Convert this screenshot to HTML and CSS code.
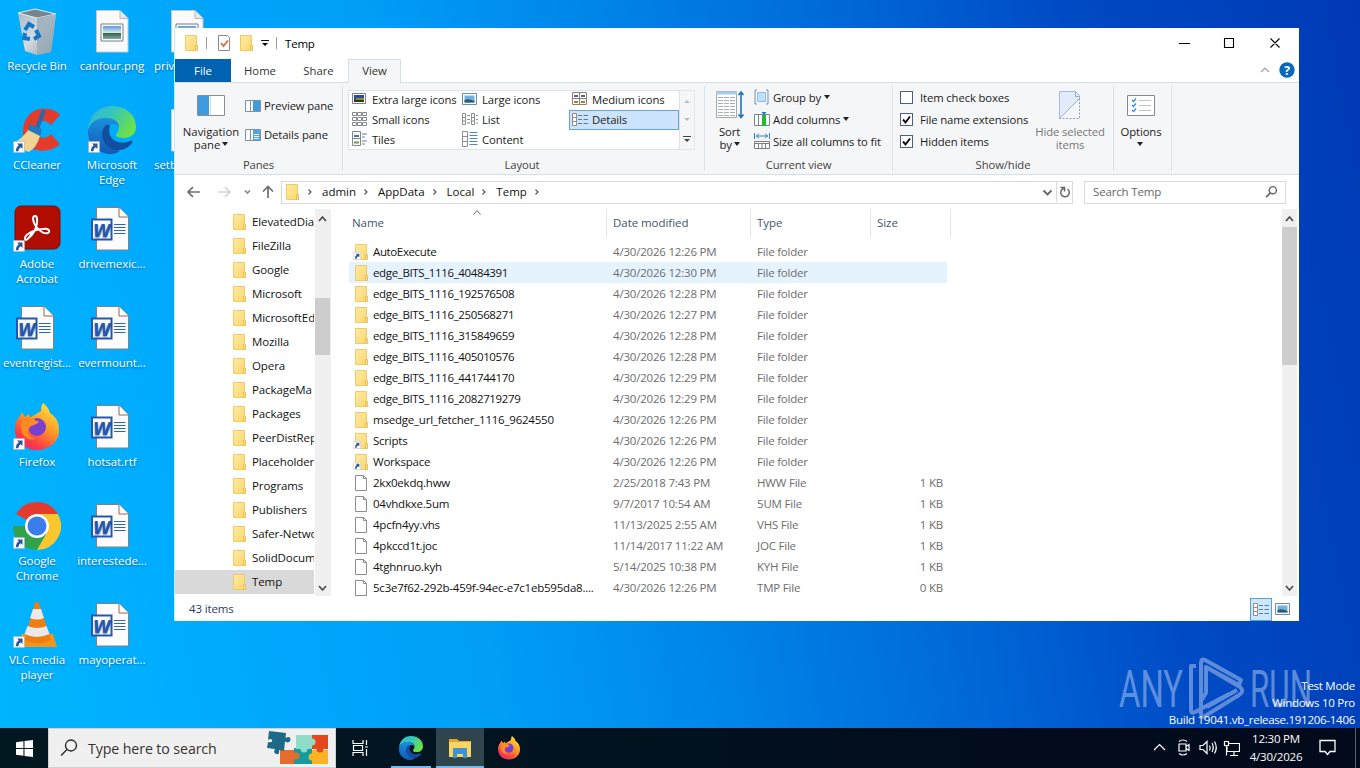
FILE: index.html
```html
<!DOCTYPE html>
<html lang="en">
<head>
<meta charset="utf-8">
<title>Temp</title>
<link rel="stylesheet" href="styles.css">
</head>
<body>
<svg class="defs" aria-hidden="true">
  <defs>
    <linearGradient id="gFold" x1="0" y1="0" x2="1" y2="1"><stop offset="0" stop-color="#ffeba6"/><stop offset="1" stop-color="#fcd66c"/></linearGradient>
    <linearGradient id="gEdge1" x1="0" y1="0" x2="1" y2=".5"><stop offset="0" stop-color="#2fb4e0"/><stop offset=".5" stop-color="#36c7b8"/><stop offset="1" stop-color="#6be04a"/></linearGradient>
    <linearGradient id="gEdge2" x1="0" y1="0" x2="0" y2="1"><stop offset="0" stop-color="#1b90dc"/><stop offset="1" stop-color="#1059b4"/></linearGradient>
    <linearGradient id="gFox" x1=".8" y1="0" x2=".2" y2="1"><stop offset="0" stop-color="#ffe83c"/><stop offset=".45" stop-color="#ff9526"/><stop offset=".8" stop-color="#fb3a47"/><stop offset="1" stop-color="#e52a7a"/></linearGradient>
    <linearGradient id="gBin" x1="0" y1="0" x2="1" y2="1"><stop offset="0" stop-color="#a9b7c1"/><stop offset=".5" stop-color="#d3dbe0"/><stop offset="1" stop-color="#8f9ba6"/></linearGradient>
    <linearGradient id="gPic" x1="0" y1="0" x2="0" y2="1"><stop offset="0" stop-color="#5d9ad8"/><stop offset=".5" stop-color="#d5e8ef"/><stop offset=".55" stop-color="#35604c"/><stop offset="1" stop-color="#7eaa9e"/></linearGradient>
    <symbol id="folder" viewBox="0 0 16 16"><path d="M2.500 .5h11v15h-11z" fill="url(#gFold)" stroke="#edcb66"/><path d="M12.500 10.500h2v5h-2z" fill="#fbe08a" stroke="#e6bc52" stroke-width=".9"/></symbol>
    <symbol id="arrow" viewBox="0 0 12 12"><path d="M.5.5h11v11H.5z" fill="#fff" stroke="#9fb4c8" stroke-width=".6"/><path d="M4 2.500h5.500V8L7.800 6.300Q5.500 7.500 5.300 10.200H3Q2.700 6.500 5.800 4.300z" fill="#2a569c"/></symbol>
    <symbol id="folderlink" viewBox="0 0 16 16"><use href="#folder" width="16" height="16"/><use href="#arrow" x="0" y="8" width="8" height="8"/></symbol>
    <symbol id="file" viewBox="0 0 16 16"><path d="M2.500.5h8l3 3v12h-11z" fill="#fff" stroke="#8d8d8d"/><path d="M10.500.5v3h3" fill="none" stroke="#8d8d8d"/></symbol>
    <symbol id="word" viewBox="0 0 48 48"><path d="M13.500 2.500H36l9.500 9.500v33h-32z" fill="#fcfcfc" stroke="#7d8287"/><path d="M36 2.500V12h9.500" fill="#fff" stroke="#a65e4c"/><path d="M31 19.500h11.500M31 22.500h11.500M31 25.500h11.500M31 28.500h11.500" stroke="#2d65b5"/><path d="M9 14.500h19.500v20H9z" fill="#fff" stroke="#2458ae" stroke-width="2"/><text x="18.900" y="31.500" text-anchor="middle" textLength="18" lengthAdjust="spacingAndGlyphs" class="w">W</text></symbol>
    <symbol id="png" viewBox="0 0 48 48"><path d="M8.500 3.500h23.500l8 8v33.500h-31.500z" fill="#fafafa" stroke="#c7c7c7"/><path d="M32 3.500v8h8" fill="#e8e8e8" stroke="#b9b9b9"/><path d="M13 17h22v17H13z" fill="#fff" stroke="#6a8098"/><path d="M15 19h18v13H15z" fill="url(#gPic)"/></symbol>
    <symbol id="edge" viewBox="0 0 48 48"><path d="M0 24C1 9 11 0 24 0c14 0 24 9 24 21 0 7-5 11-12 11-5 0-8-1-8-3s3-3 3-8c0-6-6-9-13-9C9 12 2 17 0 24z" fill="url(#gEdge1)"/><path d="M0 25C2 16 9 12 17 12c8 0 14 4 14 9-2-3-6-4-9-2-6 4-6 13-1 19 3 4 7 6 11 7-4 3-8 3-11 3C9 47-1 37 0 25z" fill="url(#gEdge2)"/><path d="M18 19c-5 5-5 12-1 18 6 9 19 10 27 0 1-2 0-3-2-2-12 5-24-2-20-16z" fill="#114f9e"/></symbol>
    <symbol id="firefox" viewBox="0 0 48 48"><path d="M30 0c4 3 6 6 7 10 6 4 9 9 9 17 0 12-10 20-22 20S2 39 2 26c0-6 2-10 5-13l2-4 3 5 4-3 1 4C20 12 26 10 28 8c0-3 0-5 2-8z" fill="url(#gFox)"/><circle cx="24" cy="24" r="9" fill="#7a3fd0"/><path d="M12 15c3-2 8-1 11 3h3c-1 3-5 4-8 5-5 3-3 12 5 13-9 2-15-4-15-12 0-4 1-7 4-9z" fill="#ff8b20"/></symbol>
    <symbol id="winlogo" viewBox="0 0 16 16"><path d="M0 2.200 7 1.200V7.500H0zM8 1 16 0V7.500H8zM0 8.500h7v6.300L0 13.800zM8 8.500h8V16L8 15z" fill="#fff"/></symbol>
    <symbol id="pic" viewBox="0 0 16 16"><path d="M.5 2.500h14v11H.5z" fill="#fff" stroke="#7089ab"/><path d="M2.500 4.500h10v7h-10z" fill="#6fb1e6"/><path d="M2.500 9q4-2 10 1v1.500h-10z" fill="#2d5c66"/></symbol>
    <symbol id="details" viewBox="0 0 16 16"><path d="M.5 2.500h4v12h-4zM.5 6.500h4M.5 10.500h4" fill="#fff" stroke="#9a8b83"/><path d="M6 4.500h4M11.500 4.500H16M6 8.500h4M11.500 8.500H16M6 12.500h4M11.500 12.500H16" stroke="#5b79a0"/></symbol>
  </defs>
</svg>

<main class="desktop">
  <section class="icons">
    <div class="dicon"><svg viewBox="0 0 48 48"><path d="M5 6 22 2l21 5-5 38-14 3-12-4z" fill="url(#gBin)"/><path d="M5 6 22 2l21 5-19 4z" fill="#75848f" stroke="#e4ebef"/><path d="M24 11 43 7l-5 38-14 3z" fill="#96a8b5" opacity=".75"/><g fill="none" stroke="#1377cb" stroke-width="4"><path d="m12 23 4-6 5 3"/><path d="m23 23 3 6-5 3"/><path d="m17 32-6-1 1-5"/></g></svg><span>Recycle Bin</span></div>
    <div class="dicon"><svg><use href="#png"/></svg><span>canfour.png</span></div>
    <div class="dicon cut"><svg><use href="#png"/></svg><span>priv</span></div>

    <div class="dicon"><svg viewBox="0 0 48 48"><path d="M47 9C41 1 25 0 17 8 7 18 8 35 18 42c9 5 22 3 29-4l-9-10c-4 5-11 5-14 0-4-6 0-13 7-13 3 0 5 2 7 4z" fill="#e43c2c"/><path d="M31 4 23 25" stroke="#256ab0" stroke-width="4"/><path d="m16 18 13 5-2 8-12-5z" fill="#2478bd"/><path d="M15 24Q9 33 0 37q5 6 16 9 8-5 11-16z" fill="#f3d394"/></svg><svg class="link"><use href="#arrow"/></svg><span>CCleaner</span></div>
    <div class="dicon"><svg><use href="#edge"/></svg><svg class="link"><use href="#arrow"/></svg><span>Microsoft Edge</span></div>
    <div class="dicon cut"><svg><use href="#png"/></svg><span>setb</span></div>

    <div class="dicon"><svg viewBox="0 0 48 48"><rect x="2" y="1" width="45" height="43" rx="6" fill="#b10c00" stroke="#820a03"/><path d="M14 34c7-4 11-14 10-20 0-4-4-4-4 0 1 7 9 16 15 14 3-2 0-5-5-4-7 0-19 5-18 10 1 3 5-2 8-8" fill="none" stroke="#fff" stroke-width="2"/></svg><svg class="link"><use href="#arrow"/></svg><span>Adobe Acrobat</span></div>
    <div class="dicon"><svg class="doc"><use href="#word"/></svg><span>drivemexic...</span></div><i></i>

    <div class="dicon"><svg class="doc"><use href="#word"/></svg><span>eventregist...</span></div>
    <div class="dicon"><svg class="doc"><use href="#word"/></svg><span>evermount...</span></div><i></i>

    <div class="dicon"><svg><use href="#firefox"/></svg><svg class="link"><use href="#arrow"/></svg><span>Firefox</span></div>
    <div class="dicon"><svg class="doc"><use href="#word"/></svg><span>hotsat.rtf</span></div><i></i>

    <div class="dicon"><svg viewBox="0 0 48 48"><path d="M24 24 3.200 12A24 24 0 0 1 44.800 12z" fill="#e33b2e"/><path d="M24 24H0A24 24 0 0 1 3.200 12zM24 24 3.200 12A24 24 0 0 0 24 48L34 30z" fill="#2fa24b"/><path d="M24 24V12h20.800A24 24 0 0 1 24 48l10.400-18z" fill="#fcc62d"/><circle cx="24" cy="24" r="12" fill="#fff"/><circle cx="24" cy="24" r="9.500" fill="#3b7ded"/></svg><svg class="link"><use href="#arrow"/></svg><span>Google Chrome</span></div>
    <div class="dicon"><svg class="doc"><use href="#word"/></svg><span>interestede...</span></div><i></i>

    <div class="dicon"><svg viewBox="0 0 48 48"><path d="M9 33h31l4 13H4z" fill="#f79415"/><path d="M22 2q2-2 4 0l12 37q-13 7-27 0z" fill="#ef7d10"/><path d="m20 8-3 9q7 3 14 0l-3-9zM14.500 25l-3 8q12 6 25 0l-3-8q-9 4-19 0z" fill="#e9e9ec"/></svg><svg class="link"><use href="#arrow"/></svg><span>VLC media player</span></div>
    <div class="dicon"><svg class="doc"><use href="#word"/></svg><span>mayoperat...</span></div>
  </section>

  <svg class="watermark" viewBox="0 0 200 70">
    <text x="2" y="52" textLength="64" lengthAdjust="spacingAndGlyphs">ANY</text>
    <text x="133" y="52" textLength="62" lengthAdjust="spacingAndGlyphs">RUN</text>
    <path d="M79 11h-5v44q0 4 4 2l34-18M84 46V8q0-5 4-3l36 20-2 5-33-18v26zM84 46v13q0 4 4 2l34-21q6-4 1-8L89 12M90 52l30-17" fill="none"/>
  </svg>
  <div class="build"><p>Test Mode</p><p>Windows 10 Pro</p><p>Build 19041.vb_release.191206-1406</p></div>

  <section class="window">
    <header class="titlebar">
      <svg class="i16"><use href="#folder"/></svg><b class="sep"></b>
      <svg class="i16 prop" viewBox="0 0 16 16"><path d="M2.500.5h9l2 2v13h-11z" fill="#fff" stroke="#8b8b8b"/><path d="m5 8 2.500 3L12 5.500" fill="none" stroke="#d86c43" stroke-width="1.800"/></svg>
      <svg class="i16 newf"><use href="#folder"/></svg>
      <svg class="qa" viewBox="0 0 8 8"><path d="M0 1.500h8" stroke="#111"/><path d="M1 4h6L4 7z"/></svg><b class="sep two"></b>
      <span class="wtitle">Temp</span>
      <svg class="controls" viewBox="0 0 110 20"><path d="M5 10.500h11M50.500 5.500h9v9h-9zM96.500 5.500l9 9M105.500 5.500l-9 9" fill="none" stroke="#000" stroke-width="1.100"/></svg>
    </header>

    <nav class="tabs">
      <span class="file">File</span><span class="tab home">Home</span><span class="tab share">Share</span><span class="tab on">View</span>
      <svg class="help" viewBox="0 0 38 20"><path d="m2 12 4-4 4 4" fill="none" stroke="#a3a3a3" stroke-width="1.200"/><circle cx="28" cy="10" r="7.700" fill="#0a68b8"/><text x="28" y="14.500" text-anchor="middle">?</text></svg>
    </nav>

    <section class="ribbon">
      <div class="group panes">
        <div class="body">
          <div class="big nav"><svg viewBox="0 0 28 30"><path d="M.5 5.500h27v20H.5z" fill="#fff" stroke="#8b8f94"/><path d="M1 6h11v19H1z" fill="#3f9ae0"/><path d="M13.500 6v19" stroke="#c9e2f5"/></svg><span>Navigation<br>pane <i class="tri"></i></span></div>
          <div class="col panelist">
            <div><svg class="i16" viewBox="0 0 16 16"><path d="M.5 2.500h15v11H.5zM5.500 2v11" fill="#fff" stroke="#7d92a8"/><path d="M8 3h7v10H8z" fill="#3f9ae0"/></svg>Preview pane</div>
            <div><svg class="i16" viewBox="0 0 16 16"><path d="M.5 2.500h15v11H.5zM5.500 2v11" fill="#fff" stroke="#7d92a8"/><path d="M8 3h7v10H8z" fill="#4fa3e6"/><path d="M9 7.500h5M9 9.500h5M9 11.500h5" stroke="#fff"/></svg>Details pane</div>
          </div>
        </div>
        <div class="glabel">Panes</div>
      </div>
      <div class="group layout">
        <div class="body">
          <div class="gallery">
            <div><svg class="i16" viewBox="0 0 16 16"><path d="M.5 2.500h13v10H.5z" fill="#fff" stroke="#83799a"/><path d="M2 4h10v7H2z" fill="#2b4b9e"/><path d="M4 7h8v4H4z" fill="#9a8b1c"/><path d="M2 9h10v2H2z" fill="#243d28"/></svg>Extra large icons</div>
            <div><svg class="i16"><use href="#pic"/></svg>Large icons</div>
            <div><svg class="i16" viewBox="0 0 16 16"><path d="M.5 1.500h14v12H.5zM7.500 1.500v12M.5 7.500h14" fill="#fff" stroke="#a2776a"/><path d="M2 5h4M9 5h4" stroke="#386da9" stroke-width="2"/><path d="M2 11h4M9 11h4" stroke="#85933e" stroke-width="2"/></svg>Medium icons</div>
            <div><svg class="i16" viewBox="0 0 16 16"><path d="M.5 1.500h4v3h-4zM5.500 1.500h4v3h-4zM10.500 1.500h4v3h-4zM.5 6.500h4v3h-4zM5.500 6.500h4v3h-4zM10.500 6.500h4v3h-4zM.5 11.500h4v3h-4zM5.500 11.500h4v3h-4zM10.500 11.500h4v3h-4z" fill="#fff" stroke="#83888e"/></svg>Small icons</div>
            <div><svg class="i16" viewBox="0 0 16 16"><path d="M.5 2.500h3v11h-3zM9.500 2.500h3v11h-3zM.5 6.500h3M.5 10h3M9.500 6.500h3M9.500 10h3M5 4.500h3M5 8.500h3M5 12h3M14 4.500h2M14 8.500h2M14 12h2" fill="none" stroke="#8b9096"/></svg>List</div>
            <div class="sel"><svg class="i16"><use href="#details"/></svg>Details</div>
            <div><svg class="i16" viewBox="0 0 16 16"><path d="M.5.5h8v14h-8zM.5 7.500h8" fill="#fff" stroke="#7f8891"/><path d="M2 5h5" stroke="#3d78b8" stroke-width="2"/><path d="M2 11.500h5" stroke="#7f8f3c" stroke-width="2"/><path d="M10 3h5M10 6h3M10 10h5M10 13h3" stroke="#6580a8"/></svg>Tiles</div>
            <div><svg class="i16" viewBox="0 0 16 16"><path d="M.5.5h5v15h-5zM.5 5.500h5M.5 10.500h5" fill="#fff" stroke="#8a8f95"/><path d="M7.500 1.500h8M7.500 4.500h8M7.500 7.500h8M7.500 10.500h8M7.500 13.500h8" stroke="#4d86cc"/></svg>Content</div>
          </div>
          <div class="gscroll"><i class="up"></i><i class="dn"></i><svg viewBox="0 0 8 8"><path d="M0 .5h8" stroke="#444"/><path d="M1 3h6L4 6z" fill="#444"/></svg></div>
        </div>
        <div class="glabel">Layout</div>
      </div>
      <div class="group view">
        <div class="body">
          <div class="big sort"><svg viewBox="0 0 28 30"><path d="M.5 1.500h20v26h-20z" fill="#fff" stroke="#a1a8ae"/><path d="M0 1.500h21v3H0z" fill="#a8cdea"/><path d="M2 7.500h17M2 10.500h17M2 13.500h17M2 16.500h17M2 19.500h17M2 22.500h17M2 25.500h17" stroke="#a4afb8" stroke-dasharray="5 1"/><path d="M25 3v23M22.500 5 25 2l2.500 3M22.500 24.500l2.500 3 2.500-3" fill="none" stroke="#2274bd" stroke-width="1.600"/></svg><span>Sort<br>by <i class="tri"></i></span></div>
          <div class="col rows">
            <div><svg class="i16" viewBox="0 0 16 16"><path d="M3 1H1v14h2M12 1h2v14h-2" fill="none" stroke="#6f8fb0"/><path d="M3.500 3.500h8v9h-8z" fill="#bfe0fa" stroke="#8dbde6"/></svg>Group by <i class="tri"></i></div>
            <div><svg class="i16" viewBox="0 0 16 16"><path d="M.5 3.500h15v11H.5zM4.500 3.500v11" fill="#fff" stroke="#7d858d"/><path d="M8 4h4v11H8z" fill="#23bb36"/><path d="M7.500 1h5L10 4z" fill="#2075be"/></svg>Add columns <i class="tri"></i></div>
            <div><svg class="i16" viewBox="0 0 16 16"><path d="M.5 0v6M15.500 0v6M2 3h12M5 .8 2.500 3 5 5.200M11 .8 13.500 3 11 5.200" fill="none" stroke="#327fc5"/><path d="M.5 8.500h15v7H.5zM.5 10.500h15M4.500 10v6M8 10v6M11.500 10v6" fill="#fff" stroke="#777d83"/></svg>Size all columns to fit</div>
          </div>
        </div>
        <div class="glabel">Current view</div>
      </div>
      <div class="group show">
        <div class="body">
          <div class="col rows checks">
            <div><i class="box"></i>Item check boxes</div>
            <div><i class="box"><svg viewBox="0 0 11 11"><path d="m2 5.500 2.500 3L9 2.500"/></svg></i>File name extensions</div>
            <div><i class="box"><svg viewBox="0 0 11 11"><path d="m2 5.500 2.500 3L9 2.500"/></svg></i>Hidden items</div>
          </div>
          <div class="big hide"><svg viewBox="0 0 28 30"><path d="M3.500 28.500V1.500h16l4 4v3z" fill="#e2ebfa" stroke="#aab8d8"/><path d="M23.500 8.500v20h-20" fill="none" stroke="#8e9cc0" stroke-dasharray="2 1.500"/><path d="m3.500 28.500 20-20M19.500 1.500v5h4" fill="none" stroke="#9eabc9"/></svg><span>Hide selected<br>items</span></div>
        </div>
        <div class="glabel">Show/hide</div>
      </div>
      <div class="group options">
        <div class="body"><div class="big"><svg viewBox="0 0 28 30"><path d="M.5 5.500h27v20H.5z" fill="#fff" stroke="#858a90"/><path d="m5 10 1.500 1.500L9 8.500M5 15l1.500 1.500L9 13.500M5 20l1.500 1.500L9 18.500" fill="none" stroke="#3190dd" stroke-width="1.400"/><path d="M12 10.500h12M12 15.500h12M12 20.500h12" stroke="#c3c3c3"/></svg><span>Options<br><i class="tri"></i></span></div></div>
      </div>
    </section>

    <section class="address">
      <svg class="navs" viewBox="0 0 100 24"><path d="M19 12H7.500M12 7l-5 5 5 5" stroke="#6d6d6d"/><path d="M37 12h11.500M44 7l5 5-5 5" stroke="#d3d3d3"/><path d="m64 10.500 2.500 2.500 2.500-2.500" stroke="#888" stroke-width="1.300"/><path d="M87 18V7M82 11.500 87 6.500l5 5" stroke="#6d6d6d"/></svg>
      <div class="crumbs">
        <svg class="i16"><use href="#folder"/></svg>
        <svg class="chev"><path d="m1.500 1.500 2.500 2.500-2.500 2.500"/></svg><span>admin</span>
        <svg class="chev"><path d="m1.500 1.500 2.500 2.500-2.500 2.500"/></svg><span>AppData</span>
        <svg class="chev"><path d="m1.500 1.500 2.500 2.500-2.500 2.500"/></svg><span>Local</span>
        <svg class="chev"><path d="m1.500 1.500 2.500 2.500-2.500 2.500"/></svg><span>Temp</span>
        <svg class="chev"><path d="m1.500 1.500 2.500 2.500-2.500 2.500"/></svg>
        <svg class="refresh" viewBox="0 0 34 20"><path d="m3.500 8.500 4 4 4-4" fill="none" stroke="#666" stroke-width="1.800"/><path d="M16.500 0v20" stroke="#ddd"/><path d="M27.500 7a4.300 4.300 0 1 1-4-.5M20.500 5.500h4v4" fill="none" stroke="#666" stroke-width="1.500"/></svg>
      </div>
      <div class="search"><span>Search Temp</span><svg viewBox="0 0 12 12"><circle cx="7.200" cy="4.800" r="3.300" fill="none" stroke="#666" stroke-width="1.300"/><path d="M5 7.200 1 11.200" stroke="#666" stroke-width="1.600"/></svg></div>
    </section>

    <section class="main">
      <ul class="tree">
        <li><svg class="i16"><use href="#folder"/></svg><span>ElevatedDia</span></li>
        <li><svg class="i16"><use href="#folder"/></svg><span>FileZilla</span></li>
        <li><svg class="i16"><use href="#folder"/></svg><span>Google</span></li>
        <li><svg class="i16"><use href="#folder"/></svg><span>Microsoft</span></li>
        <li><svg class="i16"><use href="#folder"/></svg><span>MicrosoftEdge</span></li>
        <li><svg class="i16"><use href="#folder"/></svg><span>Mozilla</span></li>
        <li><svg class="i16"><use href="#folder"/></svg><span>Opera</span></li>
        <li><svg class="i16"><use href="#folder"/></svg><span>PackageMa</span></li>
        <li><svg class="i16"><use href="#folder"/></svg><span>Packages</span></li>
        <li><svg class="i16"><use href="#folder"/></svg><span>PeerDistRep</span></li>
        <li><svg class="i16"><use href="#folder"/></svg><span>Placeholder</span></li>
        <li><svg class="i16"><use href="#folder"/></svg><span>Programs</span></li>
        <li><svg class="i16"><use href="#folder"/></svg><span>Publishers</span></li>
        <li><svg class="i16"><use href="#folder"/></svg><span>Safer-Netwo</span></li>
        <li><svg class="i16"><use href="#folder"/></svg><span>SolidDocum</span></li>
        <li class="cur"><svg class="i16"><use href="#folder"/></svg><span>Temp</span></li>
      </ul>
      <div class="bar left"><svg viewBox="0 0 15 16"><path d="m4 12 3.500-4L11 12"/></svg><b></b><svg viewBox="0 0 15 16"><path d="m4 6 3.500 4L11 6"/></svg></div>
      <div class="list">
        <div class="head"><span>Name<svg viewBox="0 0 8 5"><path d="m.5 4.500 3.500-4 3.500 4" fill="none" stroke="#666"/></svg></span><span>Date modified</span><span>Type</span><span>Size</span></div>
        <div class="row"><svg class="i16"><use href="#folderlink"/></svg><b>AutoExecute</b><span>4/30/2026 12:26 PM</span><span>File folder</span></div>
        <div class="row hot"><svg class="i16"><use href="#folder"/></svg><b>edge_BITS_1116_40484391</b><span>4/30/2026 12:30 PM</span><span>File folder</span></div>
        <div class="row"><svg class="i16"><use href="#folder"/></svg><b>edge_BITS_1116_192576508</b><span>4/30/2026 12:28 PM</span><span>File folder</span></div>
        <div class="row"><svg class="i16"><use href="#folder"/></svg><b>edge_BITS_1116_250568271</b><span>4/30/2026 12:27 PM</span><span>File folder</span></div>
        <div class="row"><svg class="i16"><use href="#folder"/></svg><b>edge_BITS_1116_315849659</b><span>4/30/2026 12:28 PM</span><span>File folder</span></div>
        <div class="row"><svg class="i16"><use href="#folder"/></svg><b>edge_BITS_1116_405010576</b><span>4/30/2026 12:28 PM</span><span>File folder</span></div>
        <div class="row"><svg class="i16"><use href="#folder"/></svg><b>edge_BITS_1116_441744170</b><span>4/30/2026 12:29 PM</span><span>File folder</span></div>
        <div class="row"><svg class="i16"><use href="#folder"/></svg><b>edge_BITS_1116_2082719279</b><span>4/30/2026 12:29 PM</span><span>File folder</span></div>
        <div class="row"><svg class="i16"><use href="#folder"/></svg><b class="wide">msedge_url_fetcher_1116_9624550</b><span>4/30/2026 12:26 PM</span><span>File folder</span></div>
        <div class="row"><svg class="i16"><use href="#folderlink"/></svg><b class="wide">Scripts</b><span>4/30/2026 12:26 PM</span><span>File folder</span></div>
        <div class="row"><svg class="i16"><use href="#folderlink"/></svg><b class="wide">Workspace</b><span>4/30/2026 12:26 PM</span><span>File folder</span></div>
        <div class="row"><svg class="i16"><use href="#file"/></svg><b class="wide">2kx0ekdq.hww</b><span>2/25/2018 7:43 PM</span><span>HWW File</span><em>1 KB</em></div>
        <div class="row"><svg class="i16"><use href="#file"/></svg><b class="wide">04vhdkxe.5um</b><span>9/7/2017 10:54 AM</span><span>5UM File</span><em>1 KB</em></div>
        <div class="row"><svg class="i16"><use href="#file"/></svg><b class="wide">4pcfn4yy.vhs</b><span>11/13/2025 2:55 AM</span><span>VHS File</span><em>1 KB</em></div>
        <div class="row"><svg class="i16"><use href="#file"/></svg><b class="wide">4pkccd1t.joc</b><span>11/14/2017 11:22 AM</span><span>JOC File</span><em>1 KB</em></div>
        <div class="row"><svg class="i16"><use href="#file"/></svg><b class="wide">4tghnruo.kyh</b><span>5/14/2025 10:38 PM</span><span>KYH File</span><em>1 KB</em></div>
        <div class="row"><svg class="i16"><use href="#file"/></svg><b class="wide">5c3e7f62-292b-459f-94ec-e7c1eb595da8....</b><span>4/30/2026 12:26 PM</span><span>TMP File</span><em>0 KB</em></div>
      </div>
      <div class="bar right"><svg viewBox="0 0 15 16"><path d="m4 12 3.500-4L11 12"/></svg><b></b><svg viewBox="0 0 15 16"><path d="m4 6 3.500 4L11 6"/></svg></div>
    </section>

    <footer class="status"><span>43 items</span><div class="modes"><i class="on"><svg class="i16"><use href="#details"/></svg></i><i><svg class="i16"><use href="#pic"/></svg></i></div></footer>
  </section>
</main>

<footer class="taskbar">
  <div class="start"><svg><use href="#winlogo"/></svg></div>
  <div class="find">
    <svg class="mag" viewBox="0 0 18 18"><circle cx="11" cy="6.500" r="5.500" fill="none" stroke="#222" stroke-width="1.300"/><path d="M7 10.500 1 16.500" stroke="#222" stroke-width="1.300"/></svg>
    <span>Type here to search</span>
    <svg class="puzzle" viewBox="0 0 64 36"><path d="M14 20h16v14H14z" fill="#e56c2e"/><path d="M28 18h18v16H28z" fill="#159c9c"/><path d="M46 20h16v14H46z" fill="#fbb321"/><path d="M30 5h16v14H30z" fill="#8fdcc9"/><path d="M46 5h16v14H46z" fill="#e5471d"/><circle cx="46" cy="12" r="3.500" fill="#8fdcc9"/><circle cx="38" cy="19" r="3.500" fill="#8fdcc9"/><circle cx="30" cy="26" r="3.500" fill="#e56c2e"/><circle cx="46" cy="27" r="3.500" fill="#fbb321"/><circle cx="54" cy="19" r="3.500" fill="#e5471d"/><path d="m3 1 17 2-.5 5q5-3 5 2-1 4-5.500 1.500L18 21l-5-1q1 5-3 4-3-1-1-5l-8-1 1-6q5 1 4-2-1-2-4 0z" fill="#1d6a88"/></svg>
  </div>
  <div class="app tv"><svg viewBox="0 0 17 16"><path d="M1 0v3.500h10V0M1 16v-3.500h10V16M1.500 5.500h9v5h-9zM14.500 0v5M14.500 9v7M13 7h3" fill="none" stroke="#fff" stroke-width="1.200"/></svg></div>
  <div class="app run"><svg><use href="#edge"/></svg></div>
  <div class="app active"><svg viewBox="0 0 24 24"><path d="M1 3h8l2 2h12v16H1z" fill="#e8a52a"/><path d="M1 6h22v15H1z" fill="#fcd462"/><path d="M5 12h14v10h-4v-4H9v4H5z" fill="#3f93d3"/></svg></div>
  <div class="app"><svg><use href="#firefox"/></svg></div>
  <div class="tray">
    <svg class="sys" viewBox="0 0 88 20"><g fill="none" stroke="#fff" stroke-width="1.200"><path d="m2 13 5.500-5.500L13 13"/><path d="M27 7h7v7h-7zM34 9.500l3-2v6l-3-2M27 4.500q4-3 8 0M27 16.500q4 3 8 0"/><path d="M48 8.500h3l4-4v12l-4-4h-3zM57.500 8.500q1.500 2.500 0 5M60 6q2.500 4.500 0 9M62.500 4.500q3.500 6 0 12"/><path d="M77 6.500h10.500v8H75v-5M82 14.500v4M78 18.500h8M72.500 4.500h4v4h-4zM74.500 8.500v10"/></g></svg>
    <div class="clock"><p>12:30 PM</p><p>4/30/2026</p></div>
    <svg class="note" viewBox="0 0 18 18"><path d="M1 1.500h15v11h-5l-2.500 3-2.500-3H1z" fill="none" stroke="#fff" stroke-width="1.300"/></svg>
  </div>
</footer>
</body>
</html>
```
FILE: styles.css
```css
* { box-sizing: border-box; }
body { margin: 0; width: 1360px; height: 768px; overflow: hidden; display: flex; flex-direction: column; font: 11.5px/15px "Open Sans", "Noto Sans", sans-serif; color: #1b1b1b; }
p { margin: 0; }
i, em { font-style: normal; }
.defs { position: absolute; width: 0; height: 0; }
.i16 { width: 16px; height: 16px; flex: none; }

/* desktop */
.desktop { position: relative; height: 728px; overflow: hidden; background: linear-gradient(79deg, #00b4ff 0%, #00afff 10%, #00a6fb 21%, #009ff6 33%, #008aeb 46%, #0067d7 66%, #004bc5 80%, #0039b4 100%); }
.icons { display: grid; grid-template-columns: 75px 75px 75px; grid-auto-rows: 99px; padding-top: 7px; width: 225px; }
.dicon { position: relative; display: flex; flex-direction: column; align-items: center; padding-right: 1px; color: #fff; text-align: center; letter-spacing: -.05px; text-shadow: 0 1px 2px rgba(0, 30, 80, .55); }
.dicon > svg { width: 48px; height: 48px; }
.dicon > svg.doc { margin-left: -11px; }
.dicon > span { margin-top: 3px; width: 66px; white-space: normal; display: flex; justify-content: center; }
.dicon > svg.link { position: absolute; left: 13px; top: 35px; width: 12px; height: 12px; }
.dicon.cut > span { justify-content: flex-start; }
.w { font: italic bold 18px "DejaVu Sans", sans-serif; fill: #2458ae; }
.watermark { position: absolute; left: 1117px; top: 655px; width: 200px; height: 70px; opacity: .5; }
.watermark text { font: 400 52px Roboto, "Open Sans", sans-serif; fill: #b9cdf0; }
.watermark path { stroke: #b9cdf0; stroke-width: 4px; stroke-linejoin: round; }
.build { position: absolute; right: 5px; bottom: 0; text-align: right; color: #fff; letter-spacing: -.27px; line-height: 17px; }

/* window */
.window { position: absolute; left: 174px; top: 28px; width: 1125px; height: 593px; background: #fff; border-left: 1px solid #bdefff; display: flex; flex-direction: column; }
.titlebar { height: 31px; display: flex; align-items: center; padding: 0 0 1px 8px; flex: none; }
.sep { width: 1px; height: 12px; background: #999; margin-left: 7px; }
.prop { margin-left: 9px; }
.newf { margin-left: 6px; }
.qa { width: 8px; height: 8px; margin-left: 7px; }
.sep.two { margin-left: 7px; }
.wtitle { margin-left: 8px; color: #000; letter-spacing: -.2px; }
.controls { width: 110px; height: 20px; margin-left: auto; margin-right: 15px; }
.tabs { height: 24px; display: flex; flex: none; border-bottom: 1px solid #d5dfe8; color: #333; line-height: 23px; font-size: 11.3px; }
.file { width: 56px; background: #0063b1; color: #fff; text-align: center; height: 23px; }
.tab { height: 24px; text-align: center; }
.home { width: 58px; }
.share { width: 59px; }
.tab.on { width: 53px; border: 1px solid #d5dfe8; border-bottom: 0; background: #f5f6f7; line-height: 22px; }
.help { width: 38px; height: 20px; margin: 1px 2px 0 auto; }
.help text { font: bold 12px "Open Sans", sans-serif; fill: #fff; }

.ribbon { height: 92px; flex: none; display: flex; background: #f5f6f8; border-bottom: 1px solid #d5dfe8; font-size: 11.3px; letter-spacing: -.12px; white-space: nowrap; padding-top: 3px; }
.group { height: 85px; border-right: 1px solid #dce3ea; display: flex; flex-direction: column; }
.body { display: flex; height: 71px; }
.glabel { text-align: center; color: #444; line-height: 15px; height: 15px; margin-top: 1px; padding-top: 1px; }
.layout .glabel { padding-right: 3px; }
.panes { width: 168px; }
.layout { width: 362px; }
.view { width: 188px; }
.show { width: 221px; }
.options { width: 58px; }
.big { display: flex; flex-direction: column; align-items: center; text-align: center; line-height: 13px; padding-top: 4px; }
.big svg { width: 28px; height: 30px; }
.big span { margin-top: 5px; }
.big.nav { width: 56px; margin-left: 8px; letter-spacing: 0; }
.tri { display: inline-block; width: 0; height: 0; border: 3px solid transparent; border-top: 4px solid #222; border-bottom: 0; vertical-align: 3px; margin-left: -1px; }
.col > div { display: flex; align-items: center; gap: 3px; }
.panelist { margin-left: 6px; padding-top: 5px; }
.panelist > div { height: 29px; }
.gallery { margin: 4px 0 0 5px; width: 332px; height: 60px; border: 1px solid #dde2e8; background: #fff; display: grid; grid-template-columns: 110px 110px 110px; grid-template-rows: 20px 20px 20px; }
.gallery > div { display: flex; align-items: center; gap: 4px; padding: 0 0 2px 3px; height: 20px; margin-top: -1px; }
.gallery > .sel { background: #cde3fb; border: 1px solid #6aa3dc; padding-left: 2px; }
.gscroll { margin-top: 4px; width: 15px; height: 60px; border: 1px solid #e3e6ea; border-left: 0; display: flex; flex-direction: column; align-items: center; justify-content: space-between; padding: 9px 0 5px; }
.gscroll svg { width: 8px; height: 8px; }
.up { border: 3px solid transparent; border-top: 0; border-bottom: 3px solid #b7bcc2; }
.dn { border: 3px solid transparent; border-bottom: 0; border-top: 3px solid #b7bcc2; }
.big.sort { width: 49px; margin-right: 1px; }
.rows > div { height: 22px; }
.view .rows > div { gap: 3px; margin-left: -1px; }
.view .rows .tri { margin-left: 0; }
.checks { margin-left: 7px; width: 132px; }
.checks > div { gap: 7px; }
.box { width: 13px; height: 13px; border: 1px solid #4c5f7c; background: #fff; flex: none; display: block; }
.box svg { display: block; width: 11px; height: 11px; }
.box path { fill: none; stroke: #111; stroke-width: 2px; }
.hide { width: 76px; color: #777; }
.options .big { width: 54px; }

.address { height: 34px; flex: none; display: flex; align-items: center; letter-spacing: 0; }
.navs { width: 100px; height: 24px; margin-left: 6px; }
.navs path { fill: none; stroke-width: 1.7px; }
.crumbs { width: 792px; height: 23px; border: 1px solid #d9d9d9; display: flex; align-items: center; padding: 0 0 1px 2px; color: #111; }
.chev { width: 6px; height: 8px; margin: 0 9px 0 7px; }
.chev path { fill: none; stroke: #555; stroke-width: 1.2px; }
.refresh { width: 34px; height: 20px; margin-left: auto; margin-right: -2px; }
.search { width: 202px; height: 23px; margin-left: 11px; border: 1px solid #d9d9d9; display: flex; align-items: center; justify-content: space-between; padding: 0 7px 1px 8px; color: #666; letter-spacing: -.15px; }
.search svg { width: 13px; height: 13px; }

.main { height: 389px; flex: none; display: flex; }
.tree { list-style: none; margin: 0; padding: 1px 0 0; width: 139px; overflow: hidden; white-space: nowrap; }
.tree li { display: flex; align-items: center; gap: 5px; height: 24px; padding-left: 56px; color: #111; letter-spacing: -.1px; }
.tree span { margin-top: -2px; }
.tree .cur { background: #d9d9d9; }
.bar { width: 16px; background: #f0f0f0; display: flex; flex-direction: column; margin-left: 1px; height: 387px; }
.bar svg { width: 15px; height: 16px; }
.bar path { fill: none; stroke: #505050; stroke-width: 1.8px; }
.bar b { background: #cdcdcd; height: 57px; margin: 73px 0 auto; width: 15px; }
.bar.right { margin-left: auto; margin-right: 2px; width: 15px; }
.bar.right b { height: 138px; margin-top: 2px; }
.list { margin-left: 18px; width: 602px; overflow: hidden; white-space: nowrap; }
.head { display: grid; grid-template-columns: 258px 144px 120px 80px; height: 28px; margin-bottom: 4px; color: #44546f; line-height: 28px; letter-spacing: -.05px; }
.head span { border-right: 1px solid #e5e5e5; padding-left: 6px; }
.head span:first-child { padding-left: 3px; position: relative; }
.head svg { position: absolute; left: 124px; top: 1px; width: 8px; height: 5px; }
.row { display: grid; grid-template-columns: 24px 240px 144px 120px 66px; height: 21px; align-items: center; color: #6d6d6d; width: 598px; letter-spacing: -.2px; }
.row svg { margin-left: 4px; }
.row b { font-weight: 400; color: #111; letter-spacing: -.37px; }
.row b.wide { letter-spacing: -.22px; }
.row em { text-align: right; }
.row.hot { background: #e5f3ff; }
.status { flex: 1; display: flex; align-items: center; justify-content: space-between; padding-left: 14px; color: #2c3c66; letter-spacing: -.15px; }
.status > span { margin-top: -2px; }
.modes { display: flex; margin-right: 5px; }
.modes i { width: 22px; height: 23px; display: grid; place-items: center; padding-bottom: 2px; }
.modes .on { background: #cce8ff; border: 1px solid #4da3dd; }

/* taskbar */
.taskbar { height: 40px; flex: none; display: flex; background: linear-gradient(90deg, #021820, #021420 35%, #020c1c 75%, #020a1c); color: #fff; }
.start { width: 48px; display: grid; place-items: center; }
.start svg { width: 17px; height: 17px; }
.find { width: 288px; background: #f0f0f0; border: 1px solid #cfd3d6; color: #333; display: flex; align-items: center; font-size: 14.2px; letter-spacing: -.1px; padding-left: 11px; }
.mag { width: 18px; height: 18px; margin-right: 10px; }
.puzzle { width: 64px; height: 36px; margin-left: auto; margin-right: 5px; }
.app { width: 48px; margin-right: 1px; display: grid; place-items: center; }
.app svg { width: 24px; height: 24px; }
.app.tv svg { width: 17px; height: 16px; }
.app.run { width: 40px; margin: 0 5px 0 6px; border-bottom: 2px solid #76b9ed; padding-top: 2px; }
.app.active { background: #30464f; border-bottom: 2px solid #76b9ed; padding-top: 2px; }
.tray { margin-left: auto; display: flex; align-items: center; border-right: 1px solid #56616c; margin-right: 4px; }
.sys { width: 88px; height: 20px; margin-top: -2px; }
.clock { width: 66px; margin-left: 3px; text-align: center; line-height: 18px; letter-spacing: -.2px; }
.note { width: 18px; height: 18px; margin: 0 18px 0 10px; }
```
